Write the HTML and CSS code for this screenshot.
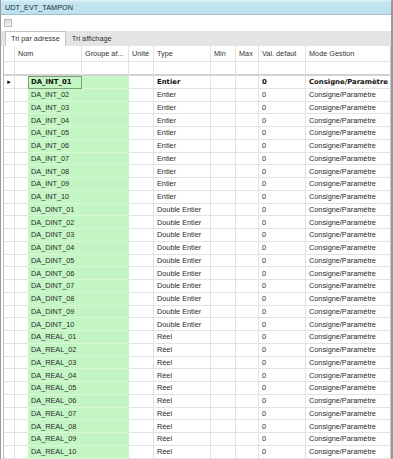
FILE: index.html
```html
<!DOCTYPE html>
<html lang="fr">
<head>
    <meta charset="UTF-8">
    <title>UDT_EVT_TAMPON</title>
    <link rel="stylesheet" href="styles.css">
</head>
<body>
<div class="window">
    <div class="titlebar">UDT_EVT_TAMPON</div>
    <div class="toolbar"><span class="check"></span></div>
    <div class="tabs">
        <span class="tab active">Tri par adresse</span>
        <span class="tab">Tri affichage</span>
    </div>
    <div class="grid">
        <div class="row head">
            <span class="rh"></span><span class="c-nom">Nom</span><span>Groupe af...</span><span>Unité</span><span>Type</span><span>Min</span><span>Max</span><span>Val. défaut</span><span class="last">Mode Gestion</span>
        </div>
        <div class="row filter">
            <span class="rh"></span><span class="c-nom"></span><span></span><span></span><span></span><span></span><span></span><span></span><span class="last"></span>
        </div>
        <div class="row current"><span class="rh">&#9656;</span><span class="pad"></span><span class="g name">DA_INT_01</span><span class="g"></span><span></span><span>Entier</span><span></span><span></span><span>0</span><span class="last">Consigne/Paramètre</span></div>
        <div class="row"><span class="rh"></span><span class="pad"></span><span class="g">DA_INT_02</span><span class="g"></span><span></span><span>Entier</span><span></span><span></span><span>0</span><span class="last">Consigne/Paramètre</span></div>
        <div class="row"><span class="rh"></span><span class="pad"></span><span class="g">DA_INT_03</span><span class="g"></span><span></span><span>Entier</span><span></span><span></span><span>0</span><span class="last">Consigne/Paramètre</span></div>
        <div class="row"><span class="rh"></span><span class="pad"></span><span class="g">DA_INT_04</span><span class="g"></span><span></span><span>Entier</span><span></span><span></span><span>0</span><span class="last">Consigne/Paramètre</span></div>
        <div class="row"><span class="rh"></span><span class="pad"></span><span class="g">DA_INT_05</span><span class="g"></span><span></span><span>Entier</span><span></span><span></span><span>0</span><span class="last">Consigne/Paramètre</span></div>
        <div class="row"><span class="rh"></span><span class="pad"></span><span class="g">DA_INT_06</span><span class="g"></span><span></span><span>Entier</span><span></span><span></span><span>0</span><span class="last">Consigne/Paramètre</span></div>
        <div class="row"><span class="rh"></span><span class="pad"></span><span class="g">DA_INT_07</span><span class="g"></span><span></span><span>Entier</span><span></span><span></span><span>0</span><span class="last">Consigne/Paramètre</span></div>
        <div class="row"><span class="rh"></span><span class="pad"></span><span class="g">DA_INT_08</span><span class="g"></span><span></span><span>Entier</span><span></span><span></span><span>0</span><span class="last">Consigne/Paramètre</span></div>
        <div class="row"><span class="rh"></span><span class="pad"></span><span class="g">DA_INT_09</span><span class="g"></span><span></span><span>Entier</span><span></span><span></span><span>0</span><span class="last">Consigne/Paramètre</span></div>
        <div class="row"><span class="rh"></span><span class="pad"></span><span class="g">DA_INT_10</span><span class="g"></span><span></span><span>Entier</span><span></span><span></span><span>0</span><span class="last">Consigne/Paramètre</span></div>
        <div class="row"><span class="rh"></span><span class="pad"></span><span class="g">DA_DINT_01</span><span class="g"></span><span></span><span>Double Entier</span><span></span><span></span><span>0</span><span class="last">Consigne/Paramètre</span></div>
        <div class="row"><span class="rh"></span><span class="pad"></span><span class="g">DA_DINT_02</span><span class="g"></span><span></span><span>Double Entier</span><span></span><span></span><span>0</span><span class="last">Consigne/Paramètre</span></div>
        <div class="row"><span class="rh"></span><span class="pad"></span><span class="g">DA_DINT_03</span><span class="g"></span><span></span><span>Double Entier</span><span></span><span></span><span>0</span><span class="last">Consigne/Paramètre</span></div>
        <div class="row"><span class="rh"></span><span class="pad"></span><span class="g">DA_DINT_04</span><span class="g"></span><span></span><span>Double Entier</span><span></span><span></span><span>0</span><span class="last">Consigne/Paramètre</span></div>
        <div class="row"><span class="rh"></span><span class="pad"></span><span class="g">DA_DINT_05</span><span class="g"></span><span></span><span>Double Entier</span><span></span><span></span><span>0</span><span class="last">Consigne/Paramètre</span></div>
        <div class="row"><span class="rh"></span><span class="pad"></span><span class="g">DA_DINT_06</span><span class="g"></span><span></span><span>Double Entier</span><span></span><span></span><span>0</span><span class="last">Consigne/Paramètre</span></div>
        <div class="row"><span class="rh"></span><span class="pad"></span><span class="g">DA_DINT_07</span><span class="g"></span><span></span><span>Double Entier</span><span></span><span></span><span>0</span><span class="last">Consigne/Paramètre</span></div>
        <div class="row"><span class="rh"></span><span class="pad"></span><span class="g">DA_DINT_08</span><span class="g"></span><span></span><span>Double Entier</span><span></span><span></span><span>0</span><span class="last">Consigne/Paramètre</span></div>
        <div class="row"><span class="rh"></span><span class="pad"></span><span class="g">DA_DINT_09</span><span class="g"></span><span></span><span>Double Entier</span><span></span><span></span><span>0</span><span class="last">Consigne/Paramètre</span></div>
        <div class="row"><span class="rh"></span><span class="pad"></span><span class="g">DA_DINT_10</span><span class="g"></span><span></span><span>Double Entier</span><span></span><span></span><span>0</span><span class="last">Consigne/Paramètre</span></div>
        <div class="row"><span class="rh"></span><span class="pad"></span><span class="g">DA_REAL_01</span><span class="g"></span><span></span><span>Réel</span><span></span><span></span><span>0</span><span class="last">Consigne/Paramètre</span></div>
        <div class="row"><span class="rh"></span><span class="pad"></span><span class="g">DA_REAL_02</span><span class="g"></span><span></span><span>Réel</span><span></span><span></span><span>0</span><span class="last">Consigne/Paramètre</span></div>
        <div class="row"><span class="rh"></span><span class="pad"></span><span class="g">DA_REAL_03</span><span class="g"></span><span></span><span>Réel</span><span></span><span></span><span>0</span><span class="last">Consigne/Paramètre</span></div>
        <div class="row"><span class="rh"></span><span class="pad"></span><span class="g">DA_REAL_04</span><span class="g"></span><span></span><span>Réel</span><span></span><span></span><span>0</span><span class="last">Consigne/Paramètre</span></div>
        <div class="row"><span class="rh"></span><span class="pad"></span><span class="g">DA_REAL_05</span><span class="g"></span><span></span><span>Réel</span><span></span><span></span><span>0</span><span class="last">Consigne/Paramètre</span></div>
        <div class="row"><span class="rh"></span><span class="pad"></span><span class="g">DA_REAL_06</span><span class="g"></span><span></span><span>Réel</span><span></span><span></span><span>0</span><span class="last">Consigne/Paramètre</span></div>
        <div class="row"><span class="rh"></span><span class="pad"></span><span class="g">DA_REAL_07</span><span class="g"></span><span></span><span>Réel</span><span></span><span></span><span>0</span><span class="last">Consigne/Paramètre</span></div>
        <div class="row"><span class="rh"></span><span class="pad"></span><span class="g">DA_REAL_08</span><span class="g"></span><span></span><span>Réel</span><span></span><span></span><span>0</span><span class="last">Consigne/Paramètre</span></div>
        <div class="row"><span class="rh"></span><span class="pad"></span><span class="g">DA_REAL_09</span><span class="g"></span><span></span><span>Réel</span><span></span><span></span><span>0</span><span class="last">Consigne/Paramètre</span></div>
        <div class="row"><span class="rh"></span><span class="pad"></span><span class="g">DA_REAL_10</span><span class="g"></span><span></span><span>Réel</span><span></span><span></span><span>0</span><span class="last">Consigne/Paramètre</span></div>
    </div>
</div>
</body>
</html>
```

FILE: styles.css
```css
body {
    margin: 0;
    background-color: #ffffff;
    font-family: "Liberation Sans", Arial, sans-serif;
    font-size: 7.3px;
    color: #2a2a2a;
}
.window {
    width: 393px;
    height: 459px;
    box-sizing: border-box;
    border-left: 1px solid #9a9a9a;
    border-right: 2px solid #9a9a9a;
    overflow: hidden;
}
.titlebar {
    height: 15px;
    box-sizing: border-box;
    padding: 3px 0 0 4px;
    background: linear-gradient(#dff1f7 0, #c2e4f0 3px, #bde1ee 100%);
    border-bottom: 1px solid #a6bcc6;
    color: #1c2c38;
}
.toolbar {
    height: 16px;
    box-sizing: border-box;
    padding: 4px 0 0 3px;
}
.check {
    display: block;
    width: 8px;
    height: 8px;
    box-sizing: border-box;
    border: 1px solid #b9b9b9;
    background: linear-gradient(#dcdcdc, #f4f4f4);
}
.tabs {
    display: flex;
    align-items: flex-end;
    height: 15px;
    box-sizing: border-box;
    padding-left: 4px;
    background-color: #e4e4e4;
}
.tab {
    padding: 2px 6px 3px 6px;
    color: #333;
}
.tab.active {
    background-color: #ffffff;
    border: 1px solid #c4c4c4;
    border-bottom: none;
    padding: 2px 5px 3px 5px;
}
.grid {
    margin-left: 2px;
    width: 387px;
    border-left: 1px solid #bdbdbd;
}
.row {
    display: grid;
    grid-template-columns: 11px 13px 54px 47px 25px 57px 25px 23px 47px 85px;
    height: 12.75px;
    box-sizing: border-box;
}
.row span {
    display: flex;
    align-items: center;
    padding-left: 3px;
    border-right: 1px solid #e2e2e2;
    border-bottom: 1px solid #e2e2e2;
    white-space: nowrap;
    overflow: hidden;
    min-width: 0;
}
.row span.last {
    border-right: 1px solid #c8c8c8;
    overflow: visible;
}
.row span.pad {
    border-right: none;
}
.row .rh {
    padding-left: 0;
    justify-content: center;
    font-size: 7px;
    color: #000;
}
.row span.g {
    background-color: #c4f6c4;
    border-right-color: #c4f6c4;
    border-bottom-color: #d9f8d9;
}
.head {
    height: 16px;
}
.head span {
    color: #333;
}
.head .c-nom,
.filter .c-nom {
    grid-column: span 2;
}
.filter {
    height: 14px;
}
.filter span {
    border-bottom: 2px solid #d2d2d2;
}
.current span {
    font-family: "DejaVu Sans", sans-serif;
    font-size: 6.9px;
    font-weight: bold;
    color: #101010;
}
.current span.name {
    outline: 1px solid #7c9c7c;
    outline-offset: -1px;
}
```
